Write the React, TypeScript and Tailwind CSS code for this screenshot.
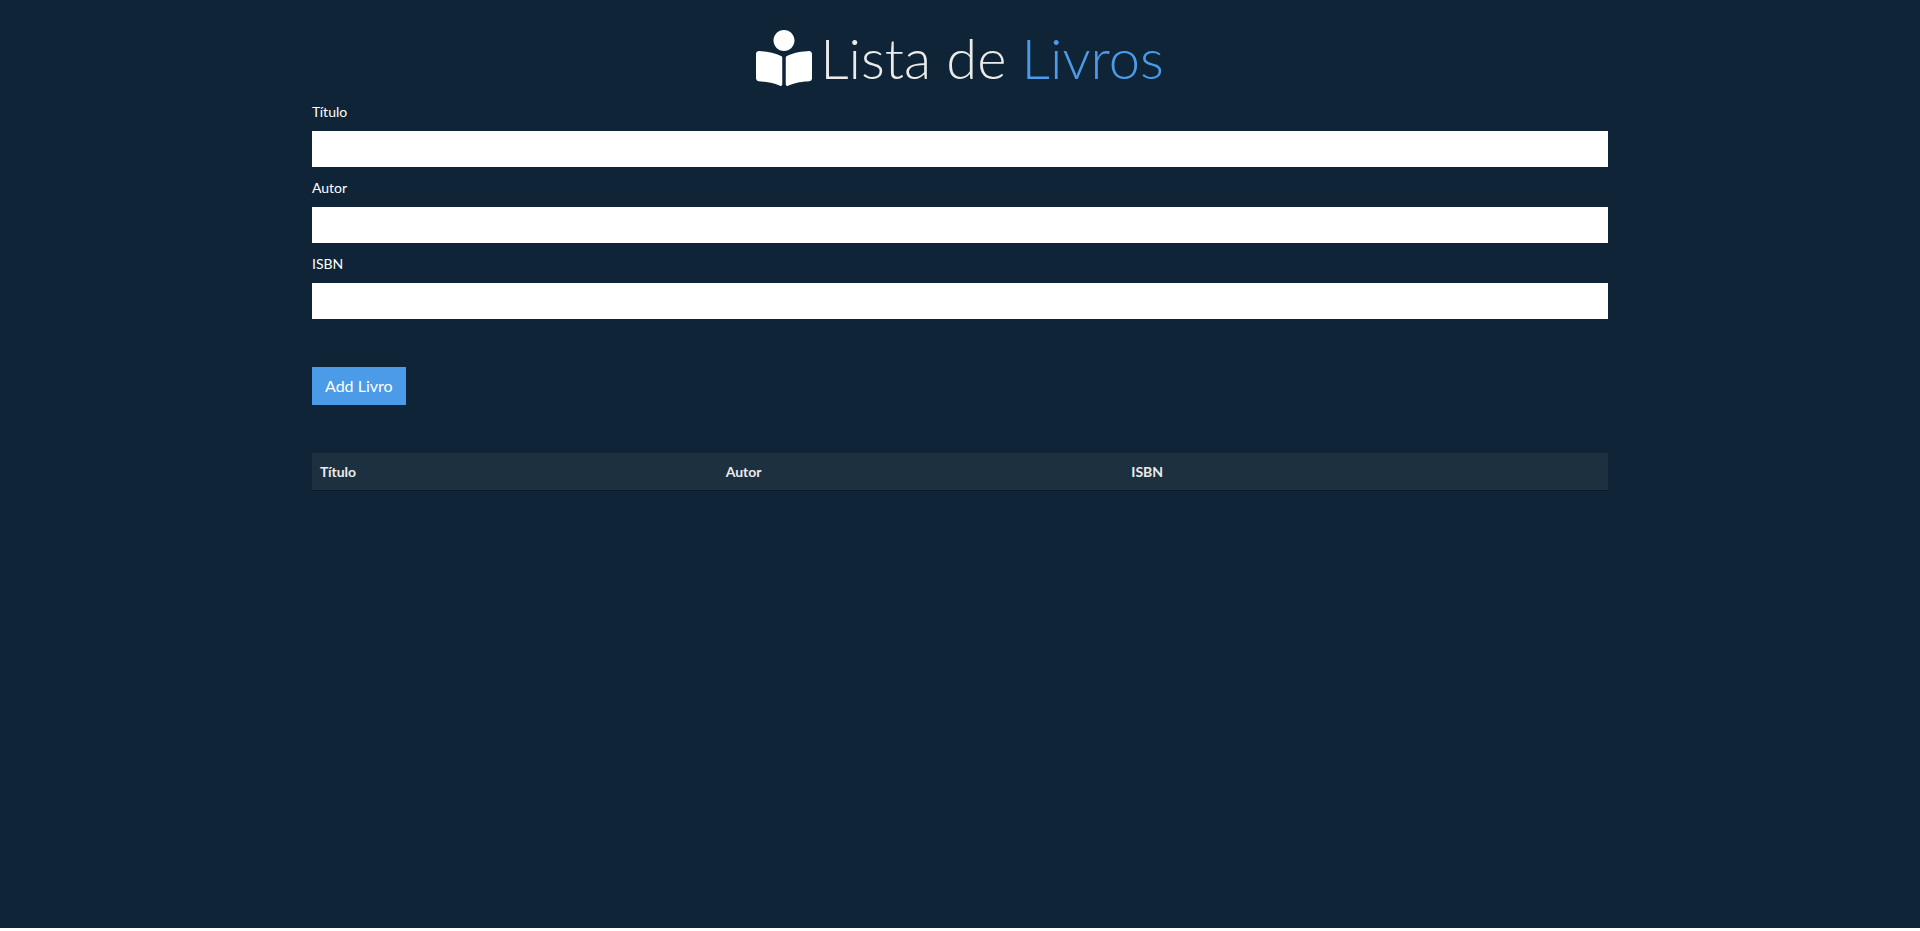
import { FaBookReader } from "react-icons/fa";

const fields = [
  { id: "title", label: "Título" },
  { id: "author", label: "Autor" },
  { id: "isbn", label: "ISBN" },
];

export default function App() {
  return (
    <div className="bg-white pb-[3px] font-['Lato',sans-serif] text-sm text-[#ebebeb]">
      <main className="min-h-[calc(100vh-3px)] bg-[#0f2537] pt-6">
        <div className="mx-auto max-w-[1320px] px-3">
          <h1 className="mb-2 flex items-center justify-center gap-2 text-[56px] font-light leading-[67px]">
            <FaBookReader className="text-white" />
            <span>
              Lista de <span className="text-[#4c9be8]">Livros</span>
            </span>
          </h1>
          <form onSubmit={(e) => e.preventDefault()}>
            {fields.map((f) => (
              <div key={f.id} className="mb-2">
                <label htmlFor={f.id} className="block pb-1.5 leading-[26px] text-white">
                  {f.label}
                </label>
                <input
                  id={f.id}
                  type="text"
                  className="block h-9 w-full bg-white px-3 text-[#212529]"
                />
              </div>
            ))}
            <button
              type="submit"
              className="mt-10 border border-[#4c9be8] bg-[#4c9be8] px-3 py-1.5 text-base text-white"
            >
              Add Livro
            </button>
          </form>
          <table className="mt-12 w-full table-fixed text-left leading-[21px]">
            <thead>
              <tr className="border-b border-[#0b1d2c] bg-[#1c3040]">
                <th className="w-[31.3%] p-2">Título</th>
                <th className="w-[31.3%] p-2">Autor</th>
                <th className="w-[31.3%] p-2">ISBN</th>
                <th></th>
              </tr>
            </thead>
            <tbody></tbody>
          </table>
        </div>
      </main>
    </div>
  );
}
